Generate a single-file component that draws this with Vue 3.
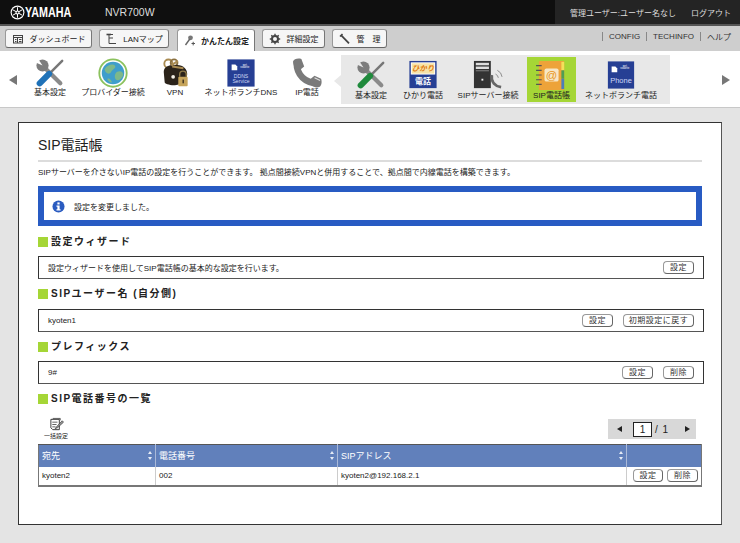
<script setup>
const tabs = [
  { name: 'ダッシュボード', icon: 'dash', width: 87 },
  { name: 'LANマップ', icon: 'lan', width: 70 },
  { name: 'かんたん設定', icon: 'easy', width: 78, active: true },
  { name: '詳細設定', icon: 'gear', width: 63 },
  { name: '管　理', icon: 'tool', width: 55 },
]

const mainItems = [
  { label: '基本設定', icon: 'tools', width: 52, handle: '#1f72b8' },
  { label: 'プロバイダー接続', icon: 'globe', width: 74 },
  { label: 'VPN', icon: 'vpn', width: 50 },
  { label: 'ネットボランチDNS', icon: 'ddns', width: 82 },
  { label: 'IP電話', icon: 'phone', width: 50 },
]

const subItems = [
  { label: '基本設定', icon: 'tools', width: 52, handle: '#1f8a3c' },
  { label: 'ひかり電話', icon: 'hikari', width: 52 },
  { label: 'SIPサーバー接続', icon: 'server', width: 78 },
  { label: 'SIP電話帳', icon: 'book', width: 49, current: true },
  { label: 'ネットボランチ電話', icon: 'netphone', width: 90 },
]
</script>

<template>
  <div class="page">
    <header class="topbar">
      <div class="brand">
        <svg class="logo" viewBox="0 0 16 16">
          <circle cx="8" cy="8" r="7.4" fill="#fff" />
          <circle cx="8" cy="8" r="6.2" fill="#111" />
          <g stroke="#fff" stroke-width="1.1" fill="none">
            <path d="M8 2.4V13.6M3.2 5.2L12.8 10.8M3.2 10.8L12.8 5.2" />
            <circle cx="8" cy="8" r="1.6" fill="#111" />
          </g>
        </svg>
        <span class="yamaha">YAMAHA</span>
      </div>
      <span class="model">NVR700W</span>
      <div class="account">
        <span>管理ユーザー:ユーザー名なし</span>
        <span>ログアウト</span>
      </div>
    </header>

    <nav class="tabbar">
      <div class="tabs">
        <div
          v-for="tab in tabs"
          :key="tab.name"
          class="tab"
          :class="{ active: tab.active }"
          :style="{ width: tab.width + 'px' }"
        >
          <svg class="tab-icon" viewBox="0 0 12 12">
            <g v-if="tab.icon === 'dash'" fill="none" stroke="#444">
              <rect x="1.5" y="2.5" width="9" height="7.5" />
              <path d="M1.5 4.5H10.5M5.5 4.5V10M7 6.5H9.5M7 8.5H9.5M3 6.5H4.5M3 8.5H4.5" />
            </g>
            <g v-else-if="tab.icon === 'lan'" fill="none" stroke="#444">
              <path d="M3 1.5H8M4 1.5V10.5M4 5H8M4 10.5H11" />
              <path d="M1.5 1.5H6" stroke-width="1.6" />
            </g>
            <g v-else-if="tab.icon === 'easy'">
              <circle cx="7.5" cy="2.8" r="2.4" fill="#777" />
              <path d="M6.8 4L2.5 10" stroke="#666" stroke-width="1.4" />
              <path d="M8.5 8.5H12M10.2 6.8V10.4" stroke="#555" fill="none" />
            </g>
            <g v-else-if="tab.icon === 'gear'">
              <circle cx="6" cy="6" r="3" fill="none" stroke="#444" stroke-width="2" />
              <path d="M6 .8V11.2M.8 6H11.2M2.3 2.3L9.7 9.7M9.7 2.3L2.3 9.7" stroke="#444" stroke-width="1.4" stroke-dasharray="2 6.4" />
            </g>
            <g v-else>
              <path d="M2 2.2L10 10.4" stroke="#444" stroke-width="1.8" />
              <path d="M1 3.5L3.5 1" stroke="#444" stroke-width="1.6" />
            </g>
          </svg>
          <span>{{ tab.name }}</span>
        </div>
      </div>
      <div class="links">
        <span>CONFIG</span>
        <span>TECHINFO</span>
        <span>ヘルプ</span>
      </div>
    </nav>

    <section class="menu">
      <i class="arrow left"></i>
      <div class="menu-main">
        <div
          v-for="item in mainItems"
          :key="item.label"
          class="menu-item"
          :style="{ width: item.width + 'px' }"
        >
          <svg class="menu-icon" viewBox="0 0 32 32">
            <g v-if="item.icon === 'tools'">
              <path d="M9 9L27 27" stroke="#8a8a8a" stroke-width="4.5" stroke-linecap="round" />
              <circle cx="8" cy="8" r="6.5" fill="#7d7d7d" />
              <path d="M8 8L2 -1L-1 4Z" fill="#fff" />
              <path d="M29 3L17 15" stroke="#777" stroke-width="2.6" stroke-linecap="round" />
              <path d="M15 17L5 27" :stroke="item.handle" stroke-width="6.5" stroke-linecap="round" />
            </g>
            <g v-else-if="item.icon === 'globe'">
              <circle cx="16" cy="16" r="14.6" fill="#fff" stroke="#8cc25e" stroke-width="2" />
              <circle cx="16" cy="16" r="12" fill="#3f9ecb" />
              <path d="M7 12C10 7 16 6 18 8C20 11 15 12 14 15C12 18 8 17 7 12ZM20 15C24 13 27 15 27 18C25 23 21 25 19 23C17 20 18 17 20 15ZM10 22C12 21 14 23 15 26C12 26 10 24 10 22Z" fill="#7db88a" />
            </g>
            <g v-else-if="item.icon === 'vpn'">
              <circle cx="9" cy="6" r="4.4" fill="none" stroke="#a98b52" stroke-width="2" />
              <circle cx="15" cy="5" r="3.6" fill="none" stroke="#8a7040" stroke-width="2" />
              <path d="M4 15C4 9 10 7 15 8C23 6 29 11 29 17C29 23 24 28 16 29C12 29 6 28 5 26Z" fill="#2b231a" />
              <path d="M12 8L19 3M13 9L25 11" stroke="#a98b52" stroke-width="2.2" />
              <circle cx="14" cy="20" r="2" fill="#f4efe5" />
              <path d="M21 20V17.5A3.5 3.5 0 0 1 28 17.5V20" fill="none" stroke="#8f7a47" stroke-width="1.5" />
              <rect x="19.5" y="20" width="10" height="10" rx="1" fill="#c6a45a" />
              <rect x="24" y="23" width="1.5" height="4" fill="#3c3120" />
            </g>
            <g v-else-if="item.icon === 'ddns'">
              <rect x="1.5" y="1.5" width="29" height="29" fill="#263f94" />
              <path d="M6 7H10L12 9V13H6Z" fill="#fff" />
              <text x="20" y="8" class="tiny">net</text>
              <text x="20" y="11" class="tiny">volante</text>
              <text x="16" y="21" class="badge">DDNS</text>
              <text x="16" y="27" class="badge">Service</text>
            </g>
            <g v-else>
              <path d="M5 5C5 18 14 27 28 27" fill="none" stroke="#7a7a7a" stroke-width="7" />
              <path d="M1 4C2 1 6 0 10 1L13 9L8 13L3 12ZM19 23L24 19L31 22C32 25 32 29 29 31C26 32 22 31 20 28Z" fill="#7a7a7a" />
              <path d="M24 21L30 24" stroke="#ddd" stroke-width="1.2" />
            </g>
          </svg>
          <span class="menu-label">{{ item.label }}</span>
        </div>
      </div>

      <div class="menu-sub">
        <div
          v-for="item in subItems"
          :key="item.label"
          class="menu-item"
          :class="{ current: item.current }"
          :style="{ width: item.width + 'px' }"
        >
          <svg class="menu-icon" viewBox="0 0 32 32">
            <g v-if="item.icon === 'tools'">
              <path d="M9 9L27 27" stroke="#8a8a8a" stroke-width="4.5" stroke-linecap="round" />
              <circle cx="8" cy="8" r="6.5" fill="#7d7d7d" />
              <path d="M8 8L2 -1L-1 4Z" fill="#e8e8e8" />
              <path d="M29 3L17 15" stroke="#777" stroke-width="2.6" stroke-linecap="round" />
              <path d="M15 17L5 27" :stroke="item.handle" stroke-width="6.5" stroke-linecap="round" />
            </g>
            <g v-else-if="item.icon === 'hikari'">
              <rect x="1.5" y="1" width="29" height="29" fill="#263f94" />
              <rect x="3" y="2.5" width="26" height="13" fill="#fff" />
              <rect x="4" y="3.5" width="24" height="11" fill="#f7e3a8" />
              <text x="16" y="12" class="hikari">ひかり</text>
              <text x="16" y="26" class="denwa">電話</text>
            </g>
            <g v-else-if="item.icon === 'server'">
              <rect x="1" y="1" width="18" height="29" fill="#333" />
              <rect x="3" y="3" width="14" height="2.6" fill="#ddd" />
              <rect x="3" y="7" width="14" height="2.6" fill="#ddd" />
              <rect x="3" y="11" width="14" height="1" fill="#888" />
              <rect x="9" y="20" width="2" height="2" fill="#eee" />
              <path d="M20 16C19 24 24 28 30 29" fill="none" stroke="#666" stroke-width="3" />
              <path d="M24 15A5 5 0 0 1 27 19M26 11A9 9 0 0 1 31 18" fill="none" stroke="#888" />
            </g>
            <g v-else-if="item.icon === 'book'">
              <rect x="2" y="1" width="27" height="31" rx="1" fill="#eda33a" />
              <path d="M-1 6H5M-1 11H5M-1 16H5M-1 21H5M-1 26H5" stroke="#555" stroke-width="1.2" />
              <rect x="8" y="9" width="15" height="14" rx="2" fill="#f7e7c6" />
              <text x="15.5" y="20.5" class="at">@</text>
              <rect x="26" y="2" width="3" height="9" fill="#f3e05a" />
              <rect x="26" y="11" width="3" height="9" fill="#4f9d54" />
              <rect x="26" y="20" width="3" height="11" fill="#4d7fb8" />
            </g>
            <g v-else>
              <rect x="2" y="1.5" width="28" height="29" fill="#263f94" />
              <path d="M6 7H10L12 9V13H6Z" fill="#fff" />
              <text x="20" y="7" class="tiny">net</text>
              <text x="20" y="10" class="tiny">volante</text>
              <text x="16" y="25" class="badge big">Phone</text>
            </g>
          </svg>
          <span class="menu-label">{{ item.label }}</span>
        </div>
      </div>
      <i class="arrow right"></i>
    </section>

    <main class="panel">
      <h1 class="title">SIP電話帳</h1>
      <p class="desc">SIPサーバーを介さないIP電話の設定を行うことができます。 拠点間接続VPNと併用することで、拠点間で内線電話を構築できます。</p>

      <div class="notice">
        <svg class="info" viewBox="0 0 14 14">
          <circle cx="7" cy="7" r="6.5" fill="#2a5bc0" />
          <rect x="5.8" y="2.6" width="2.4" height="2.2" fill="#fff" />
          <path d="M4.8 6H8.2V10H9.2V11.4H4.8V10H5.8V7.4H4.8Z" fill="#fff" />
        </svg>
        <span>設定を変更しました。</span>
      </div>

      <h2 class="heading first">設定ウィザード</h2>
      <div class="box">
        <span>設定ウィザードを使用してSIP電話帳の基本的な設定を行います。</span>
        <div class="actions">
          <button class="btn w31">設定</button>
        </div>
      </div>

      <h2 class="heading">SIPユーザー名 (自分側)</h2>
      <div class="box tall">
        <span>kyoten1</span>
        <div class="actions">
          <button class="btn w31">設定</button>
          <button class="btn w71">初期設定に戻す</button>
        </div>
      </div>

      <h2 class="heading">プレフィックス</h2>
      <div class="box">
        <span>9#</span>
        <div class="actions">
          <button class="btn w31">設定</button>
          <button class="btn w31">削除</button>
        </div>
      </div>

      <h2 class="heading">SIP電話番号の一覧</h2>
      <div class="tools">
        <div class="bulk">
          <svg viewBox="0 0 16 15">
            <path d="M2 2H11V13H4L2 11Z" fill="#fff" stroke="#333" />
            <path d="M4 1H12V3M3.5 5H9M3.5 7.5H8M3.5 10H7" fill="none" stroke="#333" stroke-width=".8" />
            <path d="M14 3.5L8 10L6.5 12L9 11L15.5 5Z" fill="#999" stroke="#333" stroke-width=".7" />
          </svg>
          <span>一括設定</span>
        </div>
        <div class="pager">
          <i class="tri prev"></i>
          <span class="page-input">1</span>
          <span class="page-total">/ 1</span>
          <i class="tri next"></i>
        </div>
      </div>

      <table class="list">
        <thead>
          <tr>
            <th class="c1">宛先<span class="sort"></span></th>
            <th class="c2">電話番号<span class="sort"></span></th>
            <th class="c3">SIPアドレス<span class="sort"></span></th>
            <th class="c4"></th>
          </tr>
        </thead>
        <tbody>
          <tr>
            <td>kyoten2</td>
            <td>002</td>
            <td>kyoten2@192.168.2.1</td>
            <td class="row-actions">
              <button class="btn w30">設定</button>
              <button class="btn w31">削除</button>
            </td>
          </tr>
        </tbody>
      </table>
    </main>
  </div>
</template>

<style scoped>
.page {
  width: 740px;
  height: 543px;
  overflow: hidden;
  background: #e4e4e4;
  color: #222;
  font-family: "Liberation Sans", "Noto Sans CJK JP", sans-serif;
  font-size: 8px;
}
.topbar {
  display: flex;
  align-items: center;
  height: 24px;
  background: #0f0f0f;
  border-bottom: 2px solid #555;
  color: #ddd;
}
.brand {
  display: flex;
  align-items: center;
  width: 105px;
  padding-left: 10px;
  box-sizing: border-box;
}
.logo {
  width: 15px;
  height: 15px;
  flex: none;
}
.yamaha {
  font-size: 14px;
  font-weight: 700;
  color: #fff;
  transform: scaleX(.77);
  transform-origin: left center;
}
.model {
  font-size: 10.5px;
  color: #ddd;
}
.account {
  display: flex;
  justify-content: space-between;
  align-items: center;
  width: 185px;
  height: 24px;
  margin-left: auto;
  padding: 0 9px 0 15px;
  box-sizing: border-box;
  background: #242424;
}
.tabbar {
  display: flex;
  justify-content: space-between;
  height: 25px;
  background: #cecece;
  box-sizing: border-box;
}
.tabs {
  display: flex;
  align-items: flex-start;
  gap: 7px;
  padding: 3px 0 0 5px;
}
.tab {
  display: flex;
  align-items: center;
  justify-content: center;
  gap: 6px;
  height: 19px;
  box-sizing: border-box;
  background: #f6f6f6;
  border: 1px solid #999;
  border-right-color: #777;
  border-bottom-color: #666;
  border-radius: 3px;
  white-space: nowrap;
}
.tab.active {
  height: 22px;
  background: #fff;
  border-bottom: none;
  border-radius: 3px 3px 0 0;
  font-weight: 700;
  margin-left: 1px;
}
.tab-icon {
  width: 12px;
  height: 12px;
  flex: none;
}
.links {
  display: flex;
  align-items: center;
  height: 20px;
  margin-right: 9px;
  color: #333;
}
.links span {
  display: flex;
  align-items: center;
  height: 9px;
  padding: 0 6px;
  border-left: 1px solid #888;
}
.links span:last-child {
  padding-right: 0;
}
.menu {
  display: flex;
  align-items: flex-start;
  height: 56px;
  background: #fff;
  border-bottom: 1px solid #c8c8c8;
  position: relative;
}
.arrow {
  flex: none;
  width: 0;
  height: 0;
  margin-top: 24px;
  border-top: 5px solid transparent;
  border-bottom: 5px solid transparent;
}
.arrow.left {
  margin-left: 9px;
  margin-right: 7px;
  border-right: 8px solid #777;
}
.arrow.right {
  margin-left: 52px;
  border-left: 8px solid #777;
}
.menu-main {
  display: flex;
  width: 317px;
  padding-top: 7px;
}
.menu-sub {
  display: flex;
  width: 325px;
  height: 47px;
  margin-top: 4px;
  padding: 2px 0 0 4px;
  background: #e8e8e8;
  position: relative;
}
.menu-sub::before {
  content: "";
  position: absolute;
  left: -7px;
  top: 20px;
  border-top: 6px solid transparent;
  border-bottom: 6px solid transparent;
  border-right: 7px solid #e8e8e8;
}
.menu-item {
  display: flex;
  flex-direction: column;
  align-items: center;
  flex: none;
  white-space: nowrap;
}
.menu-sub .menu-item {
  height: 45px;
  padding-top: 3px;
  box-sizing: border-box;
}
.menu-item.current {
  background: #a5d636;
}
.menu-icon {
  width: 30px;
  height: 30px;
  flex: none;
  overflow: visible;
}
.menu-label {
  line-height: 12px;
  margin-top: -1px;
}
.menu-sub .menu-label {
  margin-top: 0;
}
.tiny {
  font-size: 3px;
  fill: #fff;
  text-anchor: middle;
}
.badge {
  font-size: 5.5px;
  fill: #cfd8f5;
  text-anchor: middle;
}
.badge.big {
  font-size: 8px;
}
.hikari {
  font-size: 8px;
  font-weight: 700;
  font-style: italic;
  fill: #e07a10;
  text-anchor: middle;
}
.denwa {
  font-size: 8.5px;
  font-weight: 700;
  fill: #fff;
  text-anchor: middle;
}
.at {
  font-size: 12px;
  fill: #e89520;
  text-anchor: middle;
}
.panel {
  width: 704px;
  height: 403px;
  margin: 14px 0 0 18px;
  padding: 0 19px;
  box-sizing: border-box;
  background: #fff;
  border: 1px solid #333;
  border-right-color: #555;
}
.title {
  margin: 12px 0 0;
  padding-bottom: 5px;
  border-bottom: 2px solid #dcdcdc;
  font-size: 14px;
  font-weight: 400;
  line-height: 20px;
}
.desc {
  margin: 5px 0 0;
  line-height: 12px;
}
.notice {
  display: flex;
  align-items: center;
  gap: 9px;
  height: 40px;
  margin-top: 7px;
  padding-left: 8px;
  box-sizing: border-box;
  border: 6px solid #285bc3;
}
.info {
  width: 13px;
  height: 13px;
  flex: none;
}
.heading {
  display: flex;
  align-items: center;
  height: 14px;
  margin: 8px 0 0;
  font-size: 10px;
  font-weight: 700;
  letter-spacing: 1.5px;
  line-height: 14px;
}
.heading.first {
  margin-top: 9px;
}
.heading::before {
  content: "";
  width: 10px;
  height: 10px;
  margin-right: 3px;
  background: #a5d636;
  flex: none;
}
.box {
  display: flex;
  align-items: center;
  justify-content: space-between;
  height: 23px;
  margin: 7px -2px 0 0;
  padding: 0 9px;
  box-sizing: border-box;
  border: 1px solid #333;
  border-bottom-color: #555;
}
.box.tall {
  margin-top: 8px;
}
.actions {
  display: flex;
  gap: 10px;
}
.btn {
  height: 13px;
  padding: 0;
  box-sizing: border-box;
  background: #fff;
  border: 1px solid #999;
  border-right-color: #666;
  border-bottom-color: #666;
  border-radius: 4px;
  color: #333;
  font-family: inherit;
  font-size: 8px;
  line-height: 11px;
  letter-spacing: .5px;
}
.w30 { width: 30px; }
.w31 { width: 31px; }
.w71 { width: 71px; }
.tools {
  display: flex;
  justify-content: space-between;
  align-items: flex-start;
  height: 29px;
  margin-top: 9px;
}
.bulk {
  display: flex;
  flex-direction: column;
  align-items: center;
  width: 24px;
  margin: 2px 0 0 6px;
  font-size: 6px;
  line-height: 8px;
  white-space: nowrap;
}
.bulk svg {
  width: 15px;
  height: 15px;
}
.pager {
  display: flex;
  align-items: center;
  width: 88px;
  height: 20px;
  margin: 4px 6px 0 0;
  padding: 0 6px 0 9px;
  box-sizing: border-box;
  background: #d8d8d8;
  font-size: 10px;
}
.tri {
  width: 0;
  height: 0;
  border-top: 3.5px solid transparent;
  border-bottom: 3.5px solid transparent;
}
.tri.prev {
  border-right: 5px solid #222;
}
.tri.next {
  margin-left: auto;
  border-left: 5px solid #222;
}
.page-input {
  width: 19px;
  height: 15px;
  margin-left: 11px;
  box-sizing: border-box;
  background: #fff;
  border: 1px solid #222;
  text-align: center;
  line-height: 13px;
}
.page-total {
  margin-left: 3px;
  word-spacing: 2px;
}
.list {
  width: 664px;
  border-collapse: collapse;
  table-layout: fixed;
  border-top: 1px solid #555;
  border-right: 1px solid #777;
  border-bottom: 2px solid #777;
  border-left: 1px solid #777;
}
.list th {
  position: relative;
  height: 22px;
  padding: 0 3px;
  box-sizing: border-box;
  background: #6180bb;
  border-right: 1px solid #aab9d8;
  color: #fff;
  font-size: 9px;
  font-weight: 400;
  text-align: left;
}
.list th.c4 {
  border-right: none;
}
.c1 { width: 117px; }
.c2 { width: 182px; }
.c3 { width: 289px; }
.list td {
  height: 19px;
  padding: 0 3px;
  box-sizing: border-box;
  border-right: 1px solid #ccc;
}
.list td:last-child {
  border-right: none;
}
.row-actions {
  text-align: right;
  white-space: nowrap;
}
.row-actions .btn + .btn {
  margin-left: 4px;
}
.sort {
  position: absolute;
  right: 3px;
  top: 6px;
  width: 0;
  height: 0;
  border-left: 2.5px solid transparent;
  border-right: 2.5px solid transparent;
  border-bottom: 3.5px solid #e6ebf5;
}
.sort::after {
  content: "";
  position: absolute;
  left: -2.5px;
  top: 6px;
  border-left: 2.5px solid transparent;
  border-right: 2.5px solid transparent;
  border-top: 3.5px solid #e6ebf5;
}
</style>
